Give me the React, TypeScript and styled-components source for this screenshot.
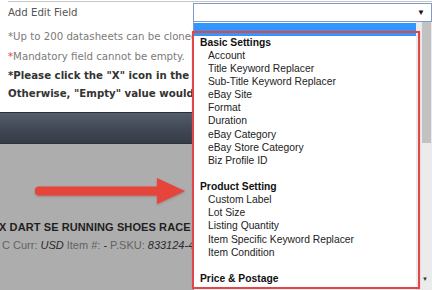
import styled, { createGlobalStyle } from 'styled-components'

const GlobalStyle = createGlobalStyle`
  html, body {
    margin: 0;
    padding: 0;
    background: #fff;
  }
`

const basicSettings = [
  'Account',
  'Title Keyword Replacer',
  'Sub-Title Keyword Replacer',
  'eBay Site',
  'Format',
  'Duration',
  'eBay Category',
  'eBay Store Category',
  'Biz Profile ID',
]

const productSetting = [
  'Custom Label',
  'Lot Size',
  'Listing Quantity',
  'Item Specific Keyword Replacer',
  'Item Condition',
]

function Arrow() {
  return (
    <ArrowSvg width="152" height="30" viewBox="0 0 152 30">
      <path d="M4 10.5 H122 V2 L150 15 L122 28 V19.5 H4 A4.5 4.5 0 0 1 4 10.5 Z" fill="#e6453c" />
    </ArrowSvg>
  )
}

export default function App() {
  return (
    <Screen>
      <GlobalStyle />
      <FormArea>
        <Rule />
        <FieldRow>Add Edit Field</FieldRow>
        <Note>*Up to 200 datasheets can be cloned at one time.</Note>
        <Note><Star>*</Star>Mandatory field cannot be empty.</Note>
        <Strong>*Please click the "X" icon in the field to remove it.</Strong>
        <Strong>Otherwise, "Empty" value would be applied.</Strong>
      </FormArea>
      <Band />
      <Backdrop>
        <Arrow />
        <ProductTitle>X DART SE RUNNING SHOES RACE</ProductTitle>
        <ProductMeta>
          <MetaLabel>C Curr:</MetaLabel><MetaValue>USD</MetaValue>{' '}
          <MetaLabel>Item #:</MetaLabel><MetaPlain>-</MetaPlain>{' '}
          <MetaLabel>P.SKU:</MetaLabel><MetaValue>833124-404</MetaValue>
        </ProductMeta>
      </Backdrop>

      <Dropdown>
        <SelectBox>
          <Caret>▼</Caret>
        </SelectBox>
        <ListBox>
          <Options>
            <Option $selected />
            <GroupLabel>Basic Settings</GroupLabel>
            {basicSettings.map((item) => (
              <Option key={item}>{item}</Option>
            ))}
            <Option />
            <GroupLabel>Product Setting</GroupLabel>
            {productSetting.map((item) => (
              <Option key={item}>{item}</Option>
            ))}
            <Option />
            <GroupLabel>Price &amp; Postage</GroupLabel>
          </Options>
          <ScrollTrack>
            <Thumb />
            <ScrollArrow>▼</ScrollArrow>
          </ScrollTrack>
        </ListBox>
      </Dropdown>
      <Highlight />
    </Screen>
  )
}

const Screen = styled('div')`
  position: relative;
  width: 432px;
  height: 290px;
  overflow: hidden;
  background: #adadad;
`

const FormArea = styled('div')`
  height: 112px;
  background: #fff;
  padding-left: 8px;
  font-family: "DejaVu Sans", Verdana, sans-serif;
  font-size: 10.2px;
  white-space: nowrap;
  box-sizing: border-box;
  padding-top: 1px;
`

const Rule = styled('div')`
  height: 1px;
  background: #c6c6c6;
`

const FieldRow = styled('div')`
  height: 21px;
  line-height: 21px;
  color: #555;
  margin-bottom: 4px;
`

const Note = styled('div')`
  line-height: 20px;
  color: #7a7a7a;
`

const Star = styled('span')`
  color: #e5403a;
`

const Strong = styled('div')`
  line-height: 18px;
  font-weight: 700;
  color: #333;
`

const Band = styled('div')`
  height: 32px;
  box-sizing: border-box;
  border-top: 1px solid #2b3038;
  border-bottom: 1px solid #2c313a;
  background: linear-gradient(#535d6c, #3f4653 60%, #363c47);
`

const Backdrop = styled('div')`
  height: 146px;
  padding-top: 32px;
  box-sizing: border-box;
  font-family: "Liberation Sans", Arial, sans-serif;
  white-space: nowrap;
`

const ArrowSvg = styled('svg')`
  display: block;
  margin-left: 35px;
  filter: drop-shadow(0 1px 1px rgba(120, 40, 40, 0.35));
`

const ProductTitle = styled('div')`
  margin-top: 14px;
  margin-left: -1px;
  font-size: 11px;
  line-height: 14px;
  font-weight: 700;
  letter-spacing: 0.1px;
  color: #1f1f1f;
`

const ProductMeta = styled('div')`
  margin-top: 3px;
  margin-left: 2px;
  font-size: 11px;
  line-height: 16px;
  color: #5e5e5e;
`

const MetaLabel = styled('span')`
  color: #636363;
`

const MetaValue = styled('i')`
  color: #2a2a2a;
  font-size: 11px;
  margin-left: 3px;
`

const MetaPlain = styled('span')`
  color: #2a2a2a;
  margin-left: 3px;
`

const Dropdown = styled('div')`
  position: absolute;
  left: 193px;
  top: 3px;
  width: 239px;
  font-family: "Liberation Sans", Arial, sans-serif;
`

const SelectBox = styled('div')`
  height: 19px;
  box-sizing: border-box;
  border: 1px solid #7f9cc8;
  background: #fff;
  display: flex;
  align-items: center;
  justify-content: flex-end;
  padding-right: 6px;
`

const Caret = styled('span')`
  font-size: 8px;
  color: #111;
`

const ListBox = styled('div')`
  display: flex;
  height: 268px;
  background: #fff;
  border-left: 1px solid #7f9cc8;
  box-sizing: border-box;
`

const Options = styled('div')`
  flex: 1;
  padding-top: 0.5px;
  font-size: 10.3px;
  color: #222;
  white-space: nowrap;
`

const Option = styled('div')<{ $selected?: boolean }>`
  height: 13.14px;
  line-height: 13.14px;
  padding-left: 14px;
  background: ${({ $selected }) => ($selected ? '#3197fc' : 'transparent')};
`

const GroupLabel = styled('div')`
  height: 13.14px;
  line-height: 13.14px;
  padding-left: 6px;
  font-weight: 700;
  color: #111;
`

const ScrollTrack = styled('div')`
  position: relative;
  width: 16px;
  background: #ebebeb;
  display: flex;
  flex-direction: column;
  align-items: flex-end;
`

const Thumb = styled('div')`
  width: 9px;
  height: 121px;
  margin-right: 1px;
  background: #c2c2c2;
`

const ScrollArrow = styled('span')`
  margin-top: auto;
  margin-bottom: 8px;
  margin-right: 4px;
  font-size: 6px;
  color: #333;
`

const Highlight = styled('div')`
  position: absolute;
  left: 192px;
  top: 31px;
  width: 228px;
  height: 258px;
  box-sizing: border-box;
  border: 2px solid #e0474a;
  box-shadow: 0 0 1px rgba(224, 71, 74, 0.5);
  pointer-events: none;
`
